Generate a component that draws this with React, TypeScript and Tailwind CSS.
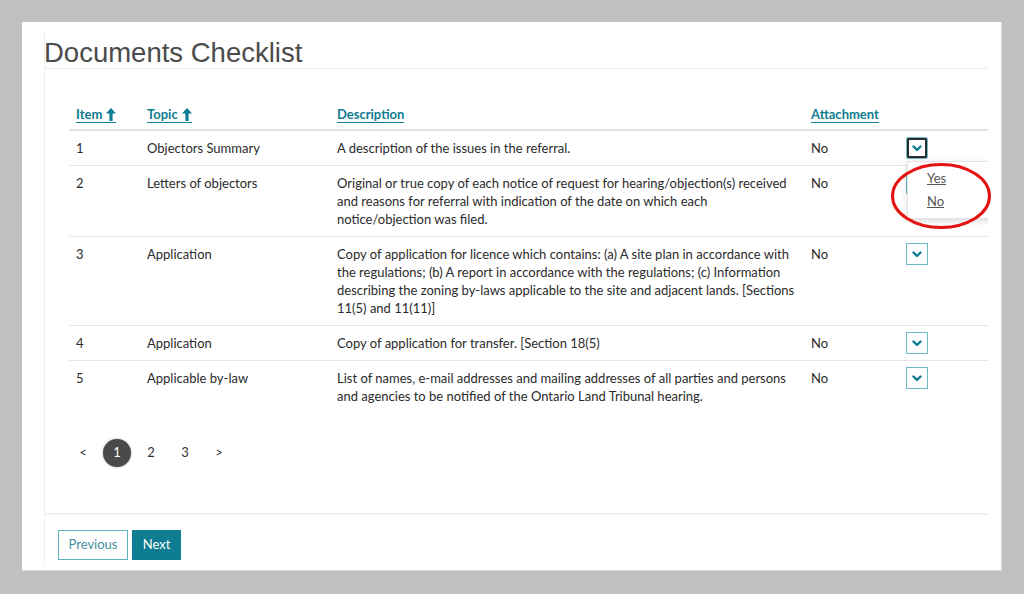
import React from 'react';

const rows = [
  { item: '1', topic: 'Objectors Summary', desc: 'A description of the issues in the referral.', att: 'No' },
  {
    item: '2',
    topic: 'Letters of objectors',
    desc: 'Original or true copy of each notice of request for hearing/objection(s) received and reasons for referral with indication of the date on which each notice/objection was filed.',
    att: 'No',
  },
  {
    item: '3',
    topic: 'Application',
    desc: 'Copy of application for licence which contains: (a) A site plan in accordance with the regulations; (b) A report in accordance with the regulations; (c) Information describing the zoning by-laws applicable to the site and adjacent lands. [Sections 11(5) and 11(11)]',
    att: 'No',
  },
  { item: '4', topic: 'Application', desc: 'Copy of application for transfer. [Section 18(5)', att: 'No' },
  {
    item: '5',
    topic: 'Applicable by-law',
    desc: 'List of names, e-mail addresses and mailing addresses of all parties and persons and agencies to be notified of the Ontario Land Tribunal hearing.',
    att: 'No',
  },
];

const cols = 'grid grid-cols-[71px_190px_474px_86px_1fr]';

const UpArrow = () => (
  <svg width="10" height="13" viewBox="0 0 10 13" className="ml-[4px] mb-[1px]">
    <path d="M5 0 L10 5.5 L6.6 5.5 L6.6 13 L3.4 13 L3.4 5.5 L0 5.5 Z" fill="#0e7c91" />
  </svg>
);

const Chevron = () => (
  <svg width="10" height="7" viewBox="0 0 10 7">
    <polyline points="1.5,1.5 5,5 8.5,1.5" fill="none" stroke="#0e7c91" strokeWidth="2.4" strokeLinecap="round" strokeLinejoin="round" />
  </svg>
);

const SortHead = ({ label, arrow }: { label: string; arrow?: boolean }) => (
  <span className="inline-flex items-end border-b border-[#0e7c91] leading-[15px] font-bold text-[#0e7c91]">
    {label}
    {arrow && <UpArrow />}
  </span>
);

const DropButton = ({ focused }: { focused?: boolean }) => (
  <button
    className={`w-[22px] h-[22px] flex items-center justify-center border border-[#6db9c7] bg-white ${
      focused ? 'shadow-[inset_0_0_0_2px_#2d2d2d] rounded-[2px]' : ''
    }`}
  >
    <Chevron />
  </button>
);

export default function App() {
  return (
    <div className="min-h-[594px] bg-[#c0c0c0] p-[22px] pb-[23px]" style={{ fontFamily: 'Lato, "Open Sans", sans-serif' }}>
      <div className="relative h-[549px] bg-white border-r border-b border-[#d9d9d9] pt-[10px] pl-[22px] pr-[13px]">
        <div className="h-[532px] border-l border-[#f0f0f0] flex flex-col">
          {/* title */}
          <div className="h-[37px] border-b border-[#ececec]">
            <h1
              className="text-[27.5px] leading-[30px] text-[#4b4b4b] mt-[6px] -ml-[1px]"
              style={{ fontFamily: '"Liberation Sans", Arial, sans-serif' }}
            >
              Documents Checklist
            </h1>
          </div>

          {/* table */}
          <div className="ml-[24px] mt-[31px] overflow-hidden text-[13px] text-[#2b2b2b]">
            <div className={`${cols} h-[31px] items-center border-b-2 border-[#e3e3e3]`}>
              <div className="pl-[7px]">
                <SortHead label="Item" arrow />
              </div>
              <div className="pl-[7px]">
                <SortHead label="Topic" arrow />
              </div>
              <div className="pl-[7px]">
                <SortHead label="Description" />
              </div>
              <div className="pl-[7px]">
                <SortHead label="Attachment" />
              </div>
              <div />
            </div>

            {rows.map((r, i) => (
              <div key={r.item} className={`${cols} leading-[18px] ${i > 0 ? 'border-t border-[#e6e6e6]' : ''}`}>
                <div className="pl-[7px] py-[8px]">{r.item}</div>
                <div className="pl-[7px] py-[8px]">{r.topic}</div>
                <div className="pl-[7px] pr-[8px] py-[8px]">{r.desc}</div>
                <div className="pl-[7px] py-[8px]">{r.att}</div>
                <div className="relative pl-[16px] pt-[6px] pb-[6px]">
                  <DropButton focused={i === 0} />
                  {i === 0 && (
                    <div className="absolute z-10 left-[17px] top-[30px] w-[110px] bg-white border border-[#e4e4e4] shadow-[0_2px_6px_rgba(0,0,0,0.15)] py-[5px]">
                      <div className="h-[23px] leading-[23px] pl-[19px] text-[#555] underline">Yes</div>
                      <div className="h-[23px] leading-[23px] pl-[19px] text-[#555] underline">No</div>
                    </div>
                  )}
                </div>
              </div>
            ))}
          </div>

          {/* pagination */}
          <div className="ml-[21px] mt-[26px] flex items-center text-[13px] text-[#333]">
            <span className="w-[34px] text-center">&lt;</span>
            <span className="w-[34px] flex justify-center">
              <span className="w-[28px] h-[28px] rounded-full bg-[#4a4a4a] text-white flex items-center justify-center shadow-[0_0_2px_rgba(0,0,0,0.4)]">
                1
              </span>
            </span>
            <span className="w-[34px] text-center">2</span>
            <span className="w-[34px] text-center">3</span>
            <span className="w-[34px] text-center">&gt;</span>
          </div>

          {/* footer */}
          <div className="mt-auto border-t-2 border-[#f0f0f0] pt-[15px] pb-[4px] pl-[13px] flex gap-[4px] text-[13px]">
            <button className="w-[70px] h-[30px] border border-[#5fb0c0] text-[#3f8fa0] bg-white">Previous</button>
            <button className="w-[49px] h-[30px] bg-[#0e7c91] text-white border border-[#0e7c91]">Next</button>
          </div>
        </div>

        {/* red annotation ellipse */}
        <svg className="absolute z-20 left-[867px] top-[140px] pointer-events-none" width="104" height="70" viewBox="0 0 104 70">
          <ellipse cx="52" cy="34" rx="48.5" ry="31.5" fill="none" stroke="#e51212" strokeWidth="3" />
        </svg>
      </div>
    </div>
  );
}
